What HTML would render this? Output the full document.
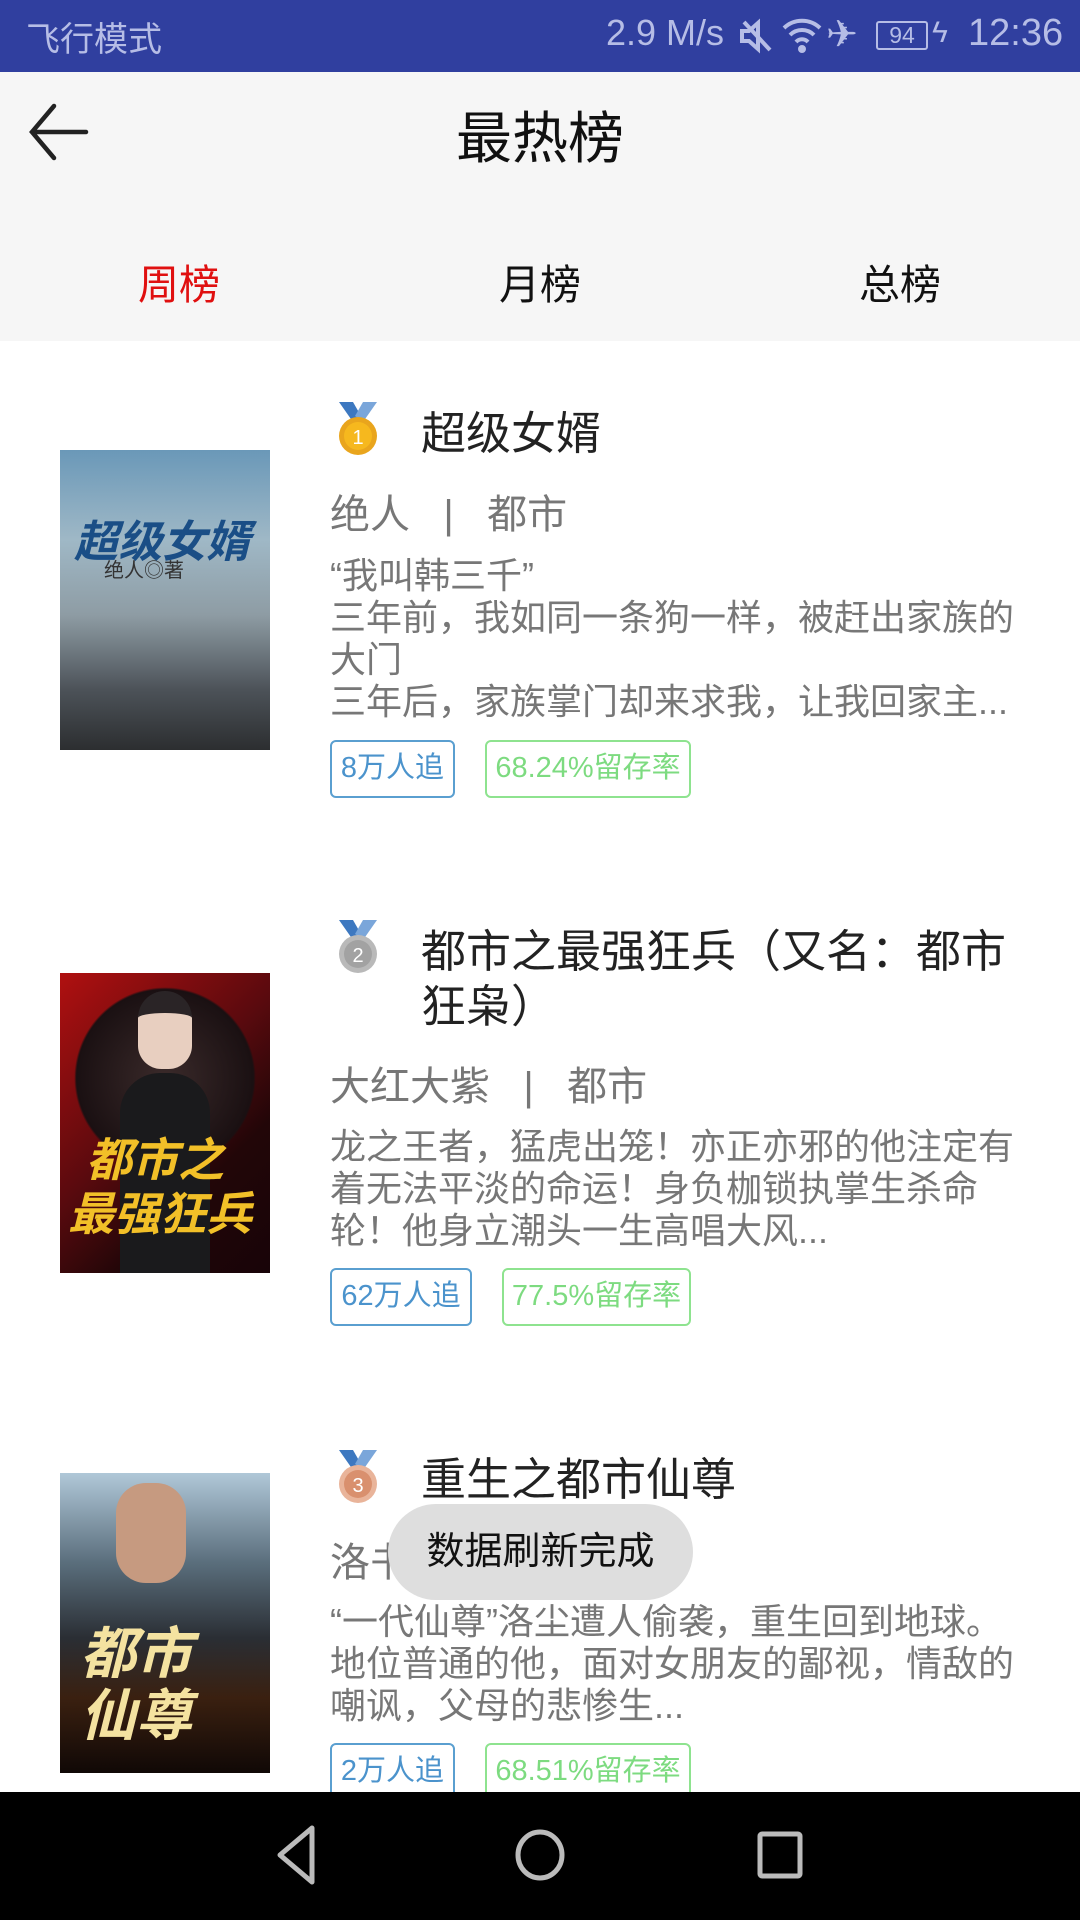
<!DOCTYPE html>
<html><head><meta charset="utf-8"><style>
*{margin:0;padding:0;box-sizing:border-box}
body{width:1080px;height:1920px;position:relative;overflow:hidden;background:#fff;font-family:"Liberation Sans","Noto Sans CJK SC",sans-serif}
.a{position:absolute;white-space:nowrap}
.sb{left:0;top:0;width:1080px;height:72px;background:#303f9f;color:#b6bde6;font-size:34px}
.hd{left:0;top:72px;width:1080px;height:269px;background:#f6f6f6}
.ttl{font-size:45px;color:#222;line-height:55px}
.au{font-size:40px;color:#777}
.ds{font-size:36px;color:#777;line-height:42px}
.tag{height:58px;border:2.5px solid;border-radius:6px;font-size:29px;line-height:52px;text-align:center}
.t1{border-color:#5a9fd0;color:#4b93cc}
.t2{border-color:#8ee38f;color:#7ddb80}
.cov{left:60px;width:210px;height:300px;overflow:hidden}
</style></head><body>
<div class="a sb">
 <div class="a" style="left:26px;top:12px">飞行模式</div>
 <div class="a" style="left:606px;top:12px;font-size:36px">2.9 M/s</div>
 <svg class="a" style="left:738px;top:18px" width="36" height="36" viewBox="0 0 36 36" fill="none" stroke="#b6bde6" stroke-width="4"><path d="M4 13h7l9-8v26l-9-8H4z"/><path d="M6 4l26 28"/></svg>
 <svg class="a" style="left:782px;top:16px" width="40" height="38" viewBox="0 0 40 38" fill="none" stroke="#b6bde6" stroke-width="4"><path d="M2 12a26 26 0 0 1 36 0M8 19a17 17 0 0 1 24 0M14 26a8 8 0 0 1 12 0"/><circle cx="20" cy="33" r="2" fill="#b6bde6"/></svg>
 <div class="a" style="left:826px;top:12px;font-size:38px">✈</div>
 <div class="a" style="left:876px;top:21px;width:52px;height:29px;border:2.5px solid #b6bde6;border-radius:3px;font-size:23px;line-height:24px;text-align:center">94</div>
 <div class="a" style="left:932px;top:16px;font-size:30px">ϟ</div>
 <div class="a" style="left:968px;top:12px;font-size:38px">12:36</div>
</div>
<div class="a hd">
 <svg class="a" style="left:28px;top:30px" width="64" height="60" viewBox="0 0 64 60" fill="none" stroke="#222" stroke-width="4.5" stroke-linecap="round"><path d="M58 30H6M26 4L4 30l22 26"/></svg>
 <div class="a" style="left:0;width:1080px;text-align:center;top:22px;font-size:56px;color:#111">最热榜</div>
 <div class="a" style="left:138px;top:179px;font-size:41px;color:#e01010">周榜</div>
 <div class="a" style="left:499px;top:179px;font-size:41px;color:#111">月榜</div>
 <div class="a" style="left:859px;top:179px;font-size:41px;color:#111">总榜</div>
</div>

<!-- item 1 -->
<div class="a cov" style="top:450px;background:linear-gradient(180deg,#6a98b8 0%,#9fb8c6 30%,#8e9ca4 55%,#4c5258 80%,#2c2e30 100%)">
 <div class="a" style="left:14px;top:56px;font-size:44px;color:#1a4e86;font-weight:bold;font-style:italic">超级女婿</div>
 <div class="a" style="left:44px;top:104px;font-size:20px;color:#333">绝人◎著</div>
</div>
<svg class="a" style="left:333px;top:402px" width="50" height="54" viewBox="0 0 50 54"><path d="M6 0h14l8 14-8 6z" fill="#3d78c0"/><path d="M44 0H30l-8 14 8 6z" fill="#7aa6da"/><circle cx="25" cy="34" r="19" fill="#e9a51d"/><circle cx="25" cy="34" r="14" fill="#f6b81e"/><text x="25" y="42" font-size="20" fill="#fff" text-anchor="middle" font-family="Liberation Sans">1</text></svg>
<div class="a ttl" style="left:421px;top:406px">超级女婿</div>
<div class="a au" style="left:330px;top:482px">绝人 &nbsp;&nbsp;| &nbsp;&nbsp;都市</div>
<div class="a ds" style="left:330px;top:555px">“我叫韩三千”<br>三年前，我如同一条狗一样，被赶出家族的<br>大门<br>三年后，家族掌门却来求我，让我回家主...</div>
<div class="a tag t1" style="left:330px;top:740px;width:125px">8万人追</div>
<div class="a tag t2" style="left:485px;top:740px;width:206px">68.24%留存率</div>

<!-- item 2 -->
<div class="a cov" style="top:973px;background:radial-gradient(circle at 50% 35%,#3a2a2a 0,#1a1012 40%,transparent 41%),linear-gradient(135deg,#b01010 0%,#5a0a0e 45%,#220608 70%,#180408 100%)">
 <div class="a" style="left:60px;top:100px;width:90px;height:200px;background:#1a1a1c;border-radius:40px 40px 0 0"></div>
 <div class="a" style="left:78px;top:18px;width:54px;height:78px;background:#e8cfc0;border-radius:30px 30px 26px 26px;border-top:22px solid #2a2426"></div>
 <div class="a" style="left:26px;top:160px;font-size:46px;line-height:54px;color:#f2c028;font-weight:bold;font-style:italic">都市之<br><span style="margin-left:-18px">最强狂兵</span></div>
</div>
<svg class="a" style="left:333px;top:920px" width="50" height="54" viewBox="0 0 50 54"><path d="M6 0h14l8 14-8 6z" fill="#3d78c0"/><path d="M44 0H30l-8 14 8 6z" fill="#7aa6da"/><circle cx="25" cy="34" r="19" fill="#b9b9b9"/><circle cx="25" cy="34" r="14" fill="#a2a2a2"/><text x="25" y="42" font-size="20" fill="#fff" text-anchor="middle" font-family="Liberation Sans">2</text></svg>
<div class="a ttl" style="left:421px;top:924px">都市之最强狂兵（又名：都市<br>狂枭）</div>
<div class="a au" style="left:330px;top:1054px">大红大紫 &nbsp;&nbsp;| &nbsp;&nbsp;都市</div>
<div class="a ds" style="left:330px;top:1126px">龙之王者，猛虎出笼！亦正亦邪的他注定有<br>着无法平淡的命运！身负枷锁执掌生杀命<br>轮！他身立潮头一生高唱大风...</div>
<div class="a tag t1" style="left:330px;top:1268px;width:142px">62万人追</div>
<div class="a tag t2" style="left:502px;top:1268px;width:189px">77.5%留存率</div>

<!-- item 3 -->
<div class="a cov" style="top:1473px;background:linear-gradient(180deg,#b0c8d8 0%,#5a6e7c 30%,#2a2e34 55%,#3a2010 75%,#100806 100%)">
 <div class="a" style="left:56px;top:10px;width:70px;height:100px;background:#c69a80;border-radius:30px"></div>
 <div class="a" style="left:20px;top:150px;font-size:56px;line-height:62px;color:#f4e2a0;font-weight:bold;font-style:italic">都市<br>仙尊</div>
</div>
<svg class="a" style="left:333px;top:1450px" width="50" height="54" viewBox="0 0 50 54"><path d="M6 0h14l8 14-8 6z" fill="#3d78c0"/><path d="M44 0H30l-8 14 8 6z" fill="#7aa6da"/><circle cx="25" cy="34" r="19" fill="#e9b49a"/><circle cx="25" cy="34" r="14" fill="#d9906e"/><text x="25" y="42" font-size="20" fill="#fff" text-anchor="middle" font-family="Liberation Sans">3</text></svg>
<div class="a ttl" style="left:421px;top:1452px">重生之都市仙尊</div>
<div class="a au" style="left:330px;top:1530px">洛书 &nbsp;&nbsp;| &nbsp;&nbsp;都市</div>
<div class="a ds" style="left:330px;top:1601px">“一代仙尊”洛尘遭人偷袭，重生回到地球。<br>地位普通的他，面对女朋友的鄙视，情敌的<br>嘲讽，父母的悲惨生...</div>
<div class="a tag t1" style="left:330px;top:1743px;width:125px">2万人追</div>
<div class="a tag t2" style="left:485px;top:1743px;width:206px">68.51%留存率</div>

<div class="a" style="left:388px;top:1504px;width:305px;height:96px;background:#dedede;border-radius:48px;font-size:38px;line-height:96px;text-align:center;color:#111">数据刷新完成</div>

<div class="a" style="left:0;top:1792px;width:1080px;height:128px;background:#000">
 <svg class="a" style="left:270px;top:28px" width="60" height="70" viewBox="0 0 60 70" fill="none" stroke="#bbb" stroke-width="5" stroke-linejoin="round"><path d="M42 8L10 35l32 27z"/></svg>
 <svg class="a" style="left:510px;top:28px" width="60" height="70" viewBox="0 0 60 70" fill="none" stroke="#bbb" stroke-width="5"><ellipse cx="30" cy="35" rx="22" ry="23"/></svg>
 <svg class="a" style="left:750px;top:28px" width="60" height="70" viewBox="0 0 60 70" fill="none" stroke="#bbb" stroke-width="5"><rect x="10" y="14" width="40" height="42" rx="2"/></svg>
</div>
</body></html>
